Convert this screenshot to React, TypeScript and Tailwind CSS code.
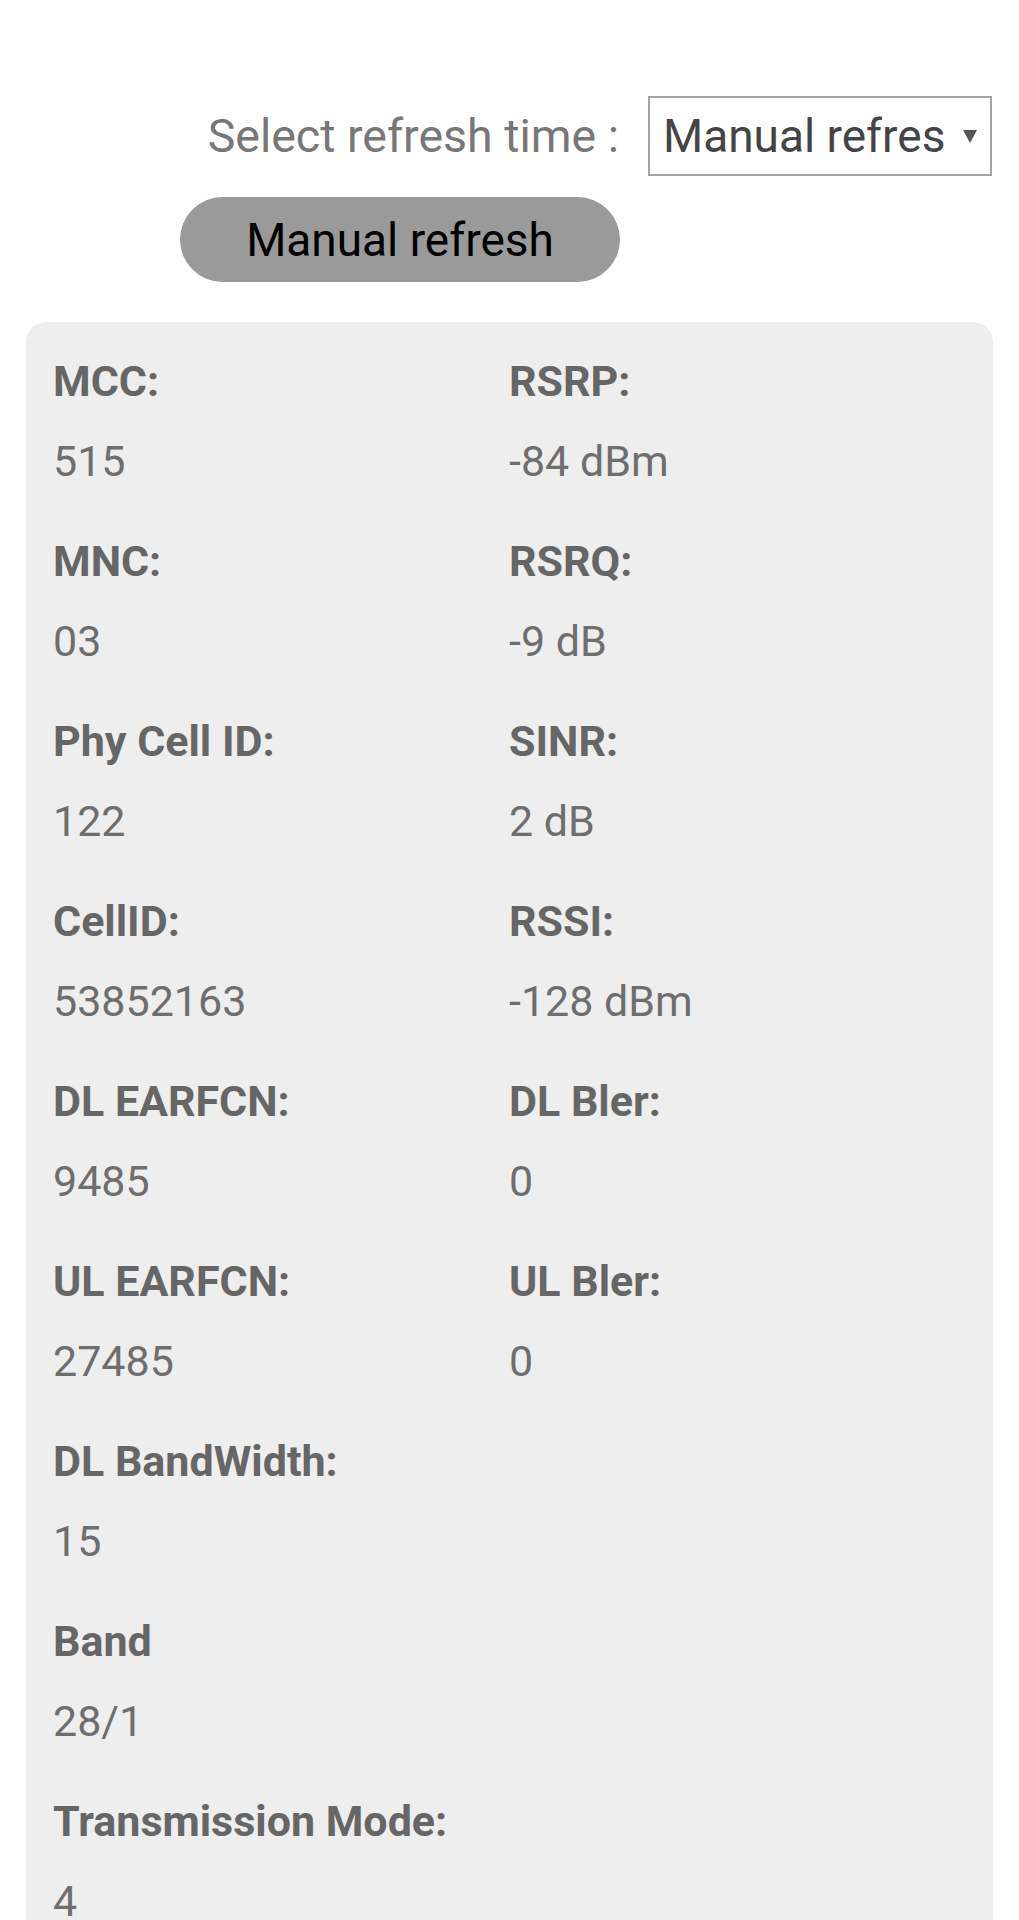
import React from "react";

const left: [string, string][] = [
  ["MCC:", "515"],
  ["MNC:", "03"],
  ["Phy Cell ID:", "122"],
  ["CellID:", "53852163"],
  ["DL EARFCN:", "9485"],
  ["UL EARFCN:", "27485"],
  ["DL BandWidth:", "15"],
  ["Band", "28/1"],
  ["Transmission Mode:", "4"],
];

const right: [string, string][] = [
  ["RSRP:", "-84 dBm"],
  ["RSRQ:", "-9 dB"],
  ["SINR:", "2 dB"],
  ["RSSI:", "-128 dBm"],
  ["DL Bler:", "0"],
  ["UL Bler:", "0"],
];

function Field({ label, value }: { label: string; value: string }) {
  return (
    <div className="mb-[40px]">
      <div className="text-[43px] leading-[60px] font-bold text-[#666666] whitespace-nowrap">{label}</div>
      <div className="mt-[20px] text-[43px] leading-[60px] text-[#6e6e6e] whitespace-nowrap">{value}</div>
    </div>
  );
}

export default function App() {
  const rows = left.map((l, i) => [l, right[i]] as const);
  return (
    <div
      className="w-[1019px] h-[1920px] overflow-hidden bg-white"
      style={{ fontFamily: "Roboto, 'Noto Sans', Arial, sans-serif" }}
    >
      <div className="pt-[96px] pr-[27px] flex justify-end items-center">
        <span className="text-[46.5px] leading-[60px] text-[#777777] mr-[29px] whitespace-nowrap">
          Select refresh time :
        </span>
        <div className="w-[344px] h-[80px] border-2 border-[#a3a3a3] bg-white flex items-center pl-[13px]">
          <span className="w-[285px] overflow-hidden whitespace-nowrap text-[46px] leading-[60px] text-[#444444]">
            Manual refresh
          </span>
          <svg className="ml-[15px]" width="14" height="14" viewBox="0 0 14 14">
            <polygon points="0,1 14,1 7,14" fill="#555555" />
          </svg>
        </div>
      </div>
      <div className="mt-[21px] ml-[180px] w-[440px] h-[85px] rounded-full bg-[#9a9a9a] flex items-center justify-center">
        <span className="text-[46px] leading-[60px] text-black whitespace-nowrap">Manual refresh</span>
      </div>
      <div className="mt-[40px] ml-[26px] w-[967px] rounded-[20px] bg-[#eeeeee] pt-[29px] pl-[27px] pr-[27px]">
        <div className="grid grid-cols-[456px_1fr]">
          {rows.map(([l, r], i) => (
            <React.Fragment key={i}>
              <Field label={l[0]} value={l[1]} />
              {r ? <Field label={r[0]} value={r[1]} /> : <div />}
            </React.Fragment>
          ))}
        </div>
      </div>
    </div>
  );
}
